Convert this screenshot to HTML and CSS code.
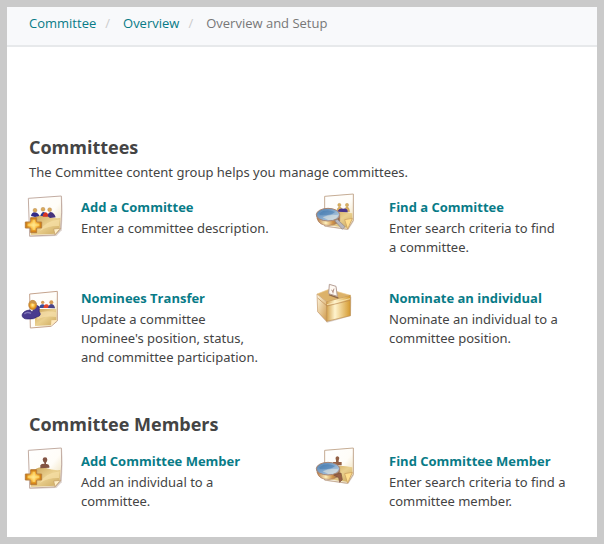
FILE: index.html
```html
<!DOCTYPE html>
<html lang="en">
<head>
<meta charset="utf-8">
<meta name="viewport" content="width=device-width, initial-scale=1">
<title>Committee - Overview and Setup</title>
<link rel="stylesheet" href="styles.css">
</head>
<body>
<svg class="defs" aria-hidden="true">
  <defs>
    <linearGradient id="paper" x1="0" y1="0" x2="1" y2="1"><stop offset="0" stop-color="#fff"/><stop offset=".55" stop-color="#fffdf8"/><stop offset="1" stop-color="#e9d5a2"/></linearGradient>
    <linearGradient id="desk" x1="0" y1="0" x2="1" y2="1"><stop offset="0" stop-color="#c9a155"/><stop offset=".5" stop-color="#ead08f"/><stop offset="1" stop-color="#cba75c"/></linearGradient>
    <radialGradient id="gold"><stop offset="0" stop-color="#fff0a8"/><stop offset=".5" stop-color="#f9b83c"/><stop offset="1" stop-color="#c5700c"/></radialGradient>
    <linearGradient id="lens" x1="0" y1="0" x2="1" y2="1"><stop offset="0" stop-color="#487cae"/><stop offset=".5" stop-color="#84a9ce"/><stop offset="1" stop-color="#d0dde8"/></linearGradient>
    <linearGradient id="rim" x1="0" y1="0" x2="1" y2="0"><stop offset="0" stop-color="#b0713f"/><stop offset=".4" stop-color="#fff0bb"/><stop offset=".7" stop-color="#cf9148"/><stop offset="1" stop-color="#8d6850"/></linearGradient>
    <linearGradient id="boxfront" x1="0" y1="0" x2="1" y2="0"><stop offset="0" stop-color="#d3a24f"/><stop offset=".35" stop-color="#fff4ce"/><stop offset="1" stop-color="#d59a30"/></linearGradient>
    <linearGradient id="boxside" x1="0" y1="0" x2="1" y2="1"><stop offset="0" stop-color="#fff9e5"/><stop offset="1" stop-color="#d09a4a"/></linearGradient>
    <filter id="soft" x="-10%" y="-10%" width="120%" height="120%"><feGaussianBlur stdDeviation="1.6"/></filter>
    <g id="sheet">
      <path d="M42 27 L141 20 Q144 66 140 121 L124 138 L43 141Z" fill="#a58b7d" opacity=".4"/>
      <path d="M40 25 L139 18 Q142 65 137 117 L120 135 L44 138Z" fill="url(#paper)" stroke="#c2aca2" stroke-width="3"/>
      <path d="M50 92 Q69 70 93 78 Q113 86 136 84 L134 114 L119 131 L47 135Z" fill="url(#desk)"/>
      <path d="M75 123 Q88 94 134 88 L132 108 Q98 107 75 123Z" fill="#f5dfa5" opacity=".75"/>
      <path d="M136 115 L116 117 L120 134Z" fill="#fff0c8" stroke="#bf9861" stroke-width="2"/>
    </g>
    <g id="people">
      <path d="M48 78 Q50 67 58 67 Q69 67 73 78 L60 81Z" fill="#302b87"/>
      <path d="M76 78 Q79 67 86 66 Q94 67 96 79Z" fill="#2c3a91"/>
      <path d="M83 80 Q84 68 92 67 Q99 68 101 80Z" fill="#d83322"/>
      <path d="M98 79 Q99 67 107 66 Q118 68 122 82 L105 84Z" fill="#45307b"/>
      <g fill="#d9a95a" stroke="#b0824e" stroke-width="1"><circle cx="60" cy="61" r="6"/><circle cx="84" cy="58" r="6"/><circle cx="104" cy="59" r="6"/></g>
    </g>
    <g id="person">
      <path d="M63 79 V70 Q66 64 75 66 V62 Q70 59 70 52 Q71 46 77 46 Q84 46 84 53 Q84 58 80 62 V66 Q88 65 90 72 V77Z" fill="#825242"/>
    </g>
    <g id="plus">
      <path d="M47 83 H65 V96 H80 V114 H65 V128 H47 V114 H31 V96 H47Z" fill="url(#gold)" stroke="#b9803f" stroke-width="3" stroke-linejoin="round"/>
      <path d="M53 89 H60 V101 H73 V108 H60 V120 H53 V108 H38 V101 H53Z" fill="#ffe37e" opacity=".6"/>
    </g>
    <g id="sheet-tall">
      <path d="M50 31 L138 24 V105 L121 132 L50 122Z" fill="#a58b7d" opacity=".35"/>
      <path d="M50 31 L136 24 V103 L119 130 L50 120Z" fill="url(#paper)" stroke="#c6ad95" stroke-width="3"/>
      <path d="M64 82 Q93 72 133 82 V100 L119 125 L58 118Z" fill="url(#desk)"/>
      <path d="M133 97 L110 101 L119 129Z" fill="#ffdf8e" stroke="#c99c5c" stroke-width="2"/>
    </g>
    <g id="magnifier">
      <path d="M26 86 Q26 112 48 117 Q79 122 95 105 V88Z" fill="url(#rim)" stroke="#a6785c" stroke-width="2"/>
      <ellipse cx="60" cy="86" rx="35" ry="19" fill="url(#lens)" stroke="#a98470" stroke-width="3"/>
      <path d="M34 82 Q53 66 81 78 Q65 91 35 87Z" fill="#3d75ad" opacity=".5"/>
      <path d="M44 94 Q65 83 91 88 Q85 103 61 102Z" fill="#e1e4df" opacity=".6"/>
    </g>
  </defs>
</svg>

<div class="page">
  <nav class="breadcrumb" aria-label="Breadcrumb">
    <ol class="breadcrumb-list">
      <li><a href="#">Committee</a></li>
      <li><a href="#">Overview</a></li>
      <li aria-current="page">Overview and Setup</li>
    </ol>
  </nav>

  <main class="content">
    <section class="group">
      <h2>Committees</h2>
      <p class="intro">The Committee content group helps you manage committees.</p>
      <div class="tiles">
        <article class="tile">
          <svg class="icon" viewBox="21 0 126 150" aria-hidden="true"><g filter="url(#soft)"><use href="#sheet"/><use href="#people"/><use href="#plus"/></g></svg>
          <div class="text"><h3><a href="#">Add a Committee</a></h3><p>Enter a committee description.</p></div>
        </article>
        <article class="tile tile-wide">
          <svg class="icon" viewBox="21 12 126 150" aria-hidden="true"><g filter="url(#soft)"><use href="#sheet-tall"/><g fill="#d9ae5c" stroke="#b88f50"><circle cx="94" cy="57" r="5"/><circle cx="117" cy="57" r="5"/><path d="M86 76 Q88 63 95 62 Q102 63 104 76ZM109 77 Q110 63 117 62 Q124 63 125 77Z"/></g><path d="M89 77 Q92 66 106 68 Q120 66 119 79Z" fill="#49348b"/><use href="#magnifier"/><path d="M80 104 L88 100 L111 122 L103 130Z" fill="#b9b7bd" stroke="#8c8587" stroke-width="2"/></g></svg>
          <div class="text"><h3><a href="#">Find a Committee</a></h3><p>Enter search criteria to find<br>a committee.</p></div>
        </article>
        <article class="tile">
          <svg class="icon" viewBox="21 -3 126 150" aria-hidden="true"><g filter="url(#soft)"><path d="M44 36 L127 28 V117 L108 133 L46 138Z" fill="url(#paper)" stroke="#c4a38c" stroke-width="3"/><path d="M60 81 H124 V113 L107 129 L60 132Z" fill="url(#desk)"/><path d="M68 93 Q94 83 123 91 V105 Q91 99 67 113Z" fill="#f6dfac" opacity=".7"/><path d="M126 114 L109 115 L108 132Z" fill="#ffe9bd"/><path d="M72 78 Q74 67 83 67 Q90 68 92 78Z" fill="#3b4e9b"/><path d="M85 78 Q87 66 95 67 Q102 68 104 78Z" fill="#e44930"/><path d="M99 78 Q101 67 110 66 Q119 68 120 79Z" fill="#494386"/><g fill="#d49b56"><circle cx="83" cy="61" r="5"/><circle cx="109" cy="61" r="6"/></g><path d="M21 99 Q25 86 44 84 L52 90 L61 70 Q73 69 73 80 Q70 87 76 96 Q76 103 65 105 Q58 112 40 111 Q22 112 21 99Z" fill="#493b8f" stroke="#30246d" stroke-width="2"/><path d="M28 96 Q36 88 48 94" fill="none" stroke="#8076b7" stroke-width="4"/><ellipse cx="53" cy="69" rx="12" ry="14" fill="url(#gold)" stroke="#c08f52" stroke-width="2"/><path d="M41 65 Q43 54 57 56 Q65 59 64 67 L51 64Z" fill="#cb9549"/></g></svg>
          <div class="text"><h3><a href="#">Nominees Transfer</a></h3><p>Update a committee<br>nominee's position, status,<br>and committee participation.</p></div>
        </article>
        <article class="tile tile-wide">
          <svg class="icon" viewBox="21 15 126 150" aria-hidden="true"><g filter="url(#soft)"><path d="M29 55 L60 43 L130 62 L129 120 L57 140 L29 108Z" fill="#a68e83" opacity=".45"/><path d="M27 54 L63 40 L127 58 L56 77Z" fill="#dcb269" stroke="#ecca8f" stroke-width="2"/><path d="M27 54 L56 77 V136 L29 107Z" fill="url(#boxside)" stroke="#c79b6b" stroke-width="2"/><path d="M56 77 L127 58 V119 L56 136Z" fill="url(#boxfront)" stroke="#c1924f" stroke-width="2"/><path d="M29 66 L57 90 L126 73" fill="none" stroke="#b98850" stroke-width="2"/><path d="M57 86 L126 68" stroke="#fff2c8" stroke-width="2"/><path d="M63 56 L91 66" stroke="#8d6848" stroke-width="4"/><path d="M64 25 L84 31 L88 61 L62 53Z" fill="#fffaf4" stroke="#b39d94" stroke-width="3"/><path d="M70 42 L75 47 L78 38 M75 43 V52" fill="none" stroke="#b18f82" stroke-width="3"/></g></svg>
          <div class="text"><h3><a href="#">Nominate an individual</a></h3><p>Nominate an individual to a<br>committee position.</p></div>
        </article>
      </div>
    </section>

    <section class="group">
      <h2>Committee Members</h2>
      <div class="tiles">
        <article class="tile">
          <svg class="icon" viewBox="21 6 126 150" aria-hidden="true"><g filter="url(#soft)"><use href="#sheet"/><use href="#person" x="13"/><use href="#plus"/></g></svg>
          <div class="text"><h3><a href="#">Add Committee Member</a></h3><p>Add an individual to a<br>committee.</p></div>
        </article>
        <article class="tile tile-wide">
          <svg class="icon" viewBox="21 12 126 150" aria-hidden="true"><g filter="url(#soft)"><use href="#sheet-tall"/><path d="M75 76 V66 H84 V61 Q80 51 88 49 Q97 51 92 61 V66 H101 V76Z" fill="#936044"/><use href="#magnifier"/><path d="M77 105 L99 99 L103 119 L95 127 L92 113Z" fill="#986044" stroke="#79503c" stroke-width="2"/></g></svg>
          <div class="text"><h3><a href="#">Find Committee Member</a></h3><p>Enter search criteria to find a<br>committee member.</p></div>
        </article>
      </div>
    </section>
  </main>
</div>
</body>
</html>
```
FILE: styles.css
```css
* {
  box-sizing: border-box;
}

body {
  margin: 0;
  color: #444;
  background: #fff;
  font: 13px/19px "Open Sans", "Noto Sans", sans-serif;
}

h2, h3, p, ol {
  margin: 0;
  padding: 0;
}

p {
  font-family: "Noto Sans", "Open Sans", sans-serif;
}

a {
  color: #087b87;
  text-decoration: none;
}

a:hover {
  text-decoration: underline;
}

.defs {
  position: absolute;
  width: 0;
  height: 0;
}

.page {
  min-height: 100vh;
  border: 7px solid #cacaca;
}

.breadcrumb {
  padding: 7px 22px 12px;
  background: #f8f9fb;
  border-bottom: 2px solid #e7e9eb;
}

.breadcrumb-list {
  display: flex;
  list-style: none;
  color: #777;
}

.breadcrumb-list li + li::before {
  content: "/";
  padding: 0 13px 0 9px;
  color: #ccc;
}

.content {
  padding: 88px 15px 0;
}

.group + .group {
  margin-top: 45px;
}

h2 {
  padding-left: 7px;
  font-size: 18px;
  line-height: 24px;
}

.intro {
  padding: 4px 7px 0;
}

.tiles {
  display: grid;
  grid-template-columns: 293px 1fr;
  row-gap: 24px;
  margin-top: 8px;
}

.tile {
  display: flex;
  align-items: flex-start;
  gap: 17px;
}

.tile-wide {
  gap: 32px;
}

.icon {
  flex: none;
  width: 42px;
  height: 50px;
  overflow: visible;
}

.text {
  padding-top: 8px;
}

h3 {
  margin-bottom: 2px;
  font-size: 13px;
  line-height: 19px;
}
```
